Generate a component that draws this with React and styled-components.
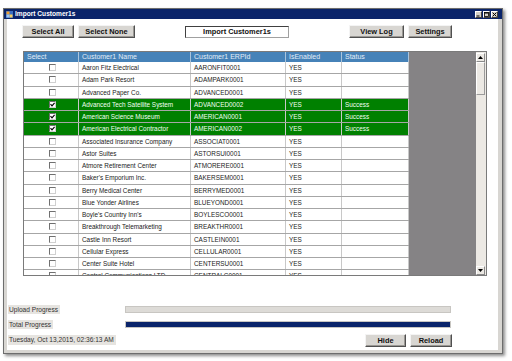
import React from "react";
import styled, { createGlobalStyle } from "styled-components";

const rows = [
  ["Aaron Fitz Electrical", "AARONFIT0001"],
  ["Adam Park Resort", "ADAMPARK0001"],
  ["Advanced Paper Co.", "ADVANCED0001"],
  ["Advanced Tech Satellite System", "ADVANCED0002", true],
  ["American Science Museum", "AMERICAN0001", true],
  ["American Electrical Contractor", "AMERICAN0002", true],
  ["Associated Insurance Company", "ASSOCIAT0001"],
  ["Astor Suites", "ASTORSUI0001"],
  ["Atmore Retirement Center", "ATMORERE0001"],
  ["Baker's Emporium Inc.", "BAKERSEM0001"],
  ["Berry Medical Center", "BERRYMED0001"],
  ["Blue Yonder Airlines", "BLUEYOND0001"],
  ["Boyle's Country Inn's", "BOYLESCO0001"],
  ["Breakthrough Telemarketing", "BREAKTHR0001"],
  ["Castle Inn Resort", "CASTLEIN0001"],
  ["Cellular Express", "CELLULAR0001"],
  ["Center Suite Hotel", "CENTERSU0001"],
  ["Central Communications LTD.", "CENTRALC0001"],
];

const cols = [55, 112, 95, 56, 67];

const GlobalStyle = createGlobalStyle`
  * { box-sizing: border-box; }
  html, body {
    margin: 0;
    background: #ffffff;
    font-family: "Liberation Sans", Arial, sans-serif;
  }
`;

const Page = styled.div`
  width: 512px;
  height: 361px;
  padding: 8px 0 0 3px;
  background: #fff;
`;

const Window = styled.div`
  width: 500px;
  border: 1px solid #6d6d6d;
  box-shadow: 2px 2px 3px rgba(0, 0, 0, 0.45);
  background: #d6d4d0;
`;

const TitleBar = styled.div`
  height: 10px;
  background: #0a246a;
  display: flex;
  align-items: center;
  padding: 0 4px 0 2px;
  gap: 2px;
`;

const Title = styled.span`
  flex: 1;
  color: #fff;
  font-weight: bold;
  font-size: 6.6px;
  line-height: 10px;
`;

const Controls = styled.div`
  display: flex;
  gap: 1px;
`;

const Ctl = styled.div`
  width: 7px;
  height: 7px;
  background: #d4d0c8;
  border: 1px solid;
  border-color: #fff #404040 #404040 #fff;
  display: flex;
  align-items: center;
  justify-content: center;
`;

const Body = styled.div`
  background: #fff;
  border-left: 3px solid #d8d6d2;
  border-right: 4px solid #d8d6d2;
  border-bottom: 3px solid #d8d6d2;
  padding: 6px 0 3px 0;
`;

const Toolbar = styled.div`
  display: flex;
  align-items: center;
  height: 13px;
  padding-left: 15px;
`;

const Button = styled.div`
  width: ${(p) => p.w}px;
  height: 13px;
  margin-left: ${(p) => p.ml || 0}px;
  background: #d8d6d2;
  border: 1px solid;
  border-color: #f4f4f4 #505050 #505050 #f4f4f4;
  box-shadow: inset -1px -1px 0 #9a9894;
  font-size: 7.4px;
  font-weight: bold;
  color: #111;
  display: flex;
  align-items: center;
  justify-content: center;
`;

const TitleBox = styled.div`
  width: 104px;
  height: 12px;
  margin-left: 50px;
  background: #fff;
  border: 1px solid;
  border-color: #404040 #a0a0a0 #a0a0a0 #404040;
  font-size: 7.4px;
  font-weight: bold;
  color: #111;
  display: flex;
  align-items: center;
  justify-content: center;
`;

const Grid = styled.div`
  margin: 13px 0 0 16px;
  width: 464px;
  height: 225px;
  border: 1px solid #7a7a7a;
  display: flex;
  background: #858385;
`;

const Table = styled.div`
  width: 385px;
  overflow: hidden;
  background: #fff;
`;

const Filler = styled.div`
  flex: 1;
  background: #858385;
`;

const Header = styled.div`
  display: flex;
  height: 10px;
  background: #4682b8;
`;

const HeadCell = styled.div`
  width: ${(p) => p.w}px;
  padding-left: 3px;
  font-size: 7px;
  line-height: 10px;
  color: #e4edf7;
  border-right: 1px solid #a9c4dd;
  white-space: nowrap;
`;

const Row = styled.div`
  display: flex;
  height: 12.25px;
  background: ${(p) => (p.ok ? "#008000" : "#fff")};
  border-bottom: 1px solid #a6a6a6;
`;

const Cell = styled.div`
  width: ${(p) => p.w}px;
  padding-left: 3px;
  font-size: 6.4px;
  line-height: 11px;
  color: ${(p) => (p.ok ? "#f2fff2" : "#222")};
  border-right: 1px solid #c8c8c8;
  white-space: nowrap;
  overflow: hidden;
  display: flex;
  align-items: center;
  justify-content: ${(p) => (p.center ? "center" : "flex-start")};
`;

const Check = styled.div`
  width: 7px;
  height: 7px;
  background: #fff;
  border: 1px solid;
  border-color: #707070 #d0d0d0 #d0d0d0 #707070;
  display: flex;
  align-items: center;
  justify-content: center;
`;

const Scrollbar = styled.div`
  width: 10px;
  background: #ece9e4;
  display: flex;
  flex-direction: column;
  padding-top: 1px;
`;

const Arrow = styled.div`
  width: 9px;
  height: 9px;
  background: #ece9e4;
  border: 1px solid;
  border-color: #fff #8a8a8a #8a8a8a #fff;
  display: flex;
  align-items: center;
  justify-content: center;
`;

const Thumb = styled.div`
  width: 9px;
  height: 33px;
  background: #ece9e4;
  border: 1px solid;
  border-color: #fff #9a9a9a #9a9a9a #fff;
`;

const Track = styled.div`
  flex: 1;
`;

const Progress = styled.div`
  margin: 28px 0 0 1px;
  width: 444px;
  display: flex;
  flex-direction: column;
  gap: 5px;
`;

const ProgRow = styled.div`
  display: flex;
  align-items: center;
  height: 10px;
`;

const LabelSlot = styled.div`
  width: 117px;
  display: flex;
  align-items: center;
`;

const Label = styled.span`
  display: block;
  background: #e6e4e0;
  font-size: 6.6px;
  line-height: ${(p) => p.lh || 9}px;
  padding: 0 2px 0 1px;
  margin-left: ${(p) => p.ml || 0}px;
  color: #333;
  white-space: nowrap;
`;

const Bar = styled.div`
  width: 326px;
  height: 7px;
  background: #dddbd7;
  border: 1px solid #c8c6c2;
`;

const Fill = styled.div`
  height: 100%;
  background: #0a246a;
`;

const Footer = styled.div`
  display: flex;
  align-items: center;
  height: 14px;
  margin-top: 4px;
  width: 445px;
`;

const Spacer = styled.div`
  flex: 1;
`;

const CheckMark = () => (
  <svg width="5" height="5" viewBox="0 0 5 5">
    <path d="M0.5 2.2 L2 3.8 L4.6 0.8" stroke="#000" strokeWidth="1.2" fill="none" />
  </svg>
);

const AppIcon = () => (
  <svg width="7" height="7" viewBox="0 0 7 7">
    <rect x="0" y="0" width="7" height="7" fill="#3a6fc4" />
    <rect x="0.5" y="0.5" width="3" height="3" fill="#f0a030" />
    <rect x="3.5" y="3.5" width="3" height="3" fill="#f6d060" />
    <rect x="0.5" y="3.5" width="3" height="3" fill="#9cc4f0" />
  </svg>
);

const headers = ["Select", "Customer1 Name", "Customer1 ERPId", "IsEnabled", "Status"];

export default function App() {
  return (
    <>
      <GlobalStyle />
      <Page>
        <Window>
          <TitleBar>
            <AppIcon />
            <Title>Import Customer1s</Title>
            <Controls>
              <Ctl>
                <svg width="5" height="5" viewBox="0 0 5 5">
                  <rect x="0.5" y="3.5" width="3" height="1" fill="#000" />
                </svg>
              </Ctl>
              <Ctl>
                <svg width="5" height="5" viewBox="0 0 5 5">
                  <rect x="0.5" y="0.5" width="4" height="4" fill="none" stroke="#000" strokeWidth="0.8" />
                  <rect x="0.5" y="0.5" width="4" height="1" fill="#000" />
                </svg>
              </Ctl>
              <Ctl>
                <svg width="5" height="5" viewBox="0 0 5 5">
                  <path d="M0.6 0.6 L4.4 4.4 M4.4 0.6 L0.6 4.4" stroke="#000" strokeWidth="1" />
                </svg>
              </Ctl>
            </Controls>
          </TitleBar>
          <Body>
            <Toolbar>
              <Button w={52}>Select All</Button>
              <Button w={57} ml={4}>Select None</Button>
              <TitleBox>Import Customer1s</TitleBox>
              <Button w={55} ml={60}>View Log</Button>
              <Button w={44} ml={4}>Settings</Button>
            </Toolbar>
            <Grid>
              <Table>
                <Header>
                  {headers.map((h, i) => (
                    <HeadCell key={h} w={cols[i]}>{h}</HeadCell>
                  ))}
                </Header>
                {rows.map(([name, id, ok]) => (
                  <Row key={id} ok={ok}>
                    <Cell w={cols[0]} center ok={ok}>
                      <Check>{ok && <CheckMark />}</Check>
                    </Cell>
                    <Cell w={cols[1]} ok={ok}>{name}</Cell>
                    <Cell w={cols[2]} ok={ok}>{id}</Cell>
                    <Cell w={cols[3]} ok={ok}>YES</Cell>
                    <Cell w={cols[4]} ok={ok}>{ok ? "Success" : ""}</Cell>
                  </Row>
                ))}
              </Table>
              <Filler />
              <Scrollbar>
                <Arrow>
                  <svg width="5" height="3" viewBox="0 0 5 3">
                    <path d="M0 3 L2.5 0 L5 3 Z" fill="#000" />
                  </svg>
                </Arrow>
                <Thumb />
                <Track />
                <Arrow>
                  <svg width="5" height="3" viewBox="0 0 5 3">
                    <path d="M0 0 L2.5 3 L5 0 Z" fill="#000" />
                  </svg>
                </Arrow>
              </Scrollbar>
            </Grid>
            <Progress>
              <ProgRow>
                <LabelSlot><Label>Upload Progress</Label></LabelSlot>
                <Bar />
              </ProgRow>
              <ProgRow>
                <LabelSlot><Label>Total Progress</Label></LabelSlot>
                <Bar><Fill style={{ width: "100%" }} /></Bar>
              </ProgRow>
            </Progress>
            <Footer>
              <Label ml={1} lh={10}>Tuesday, Oct 13,2015, 02:36:13 AM</Label>
              <Spacer />
              <Button w={41}>Hide</Button>
              <Button w={42} ml={4}>Reload</Button>
            </Footer>
          </Body>
        </Window>
      </Page>
    </>
  );
}
